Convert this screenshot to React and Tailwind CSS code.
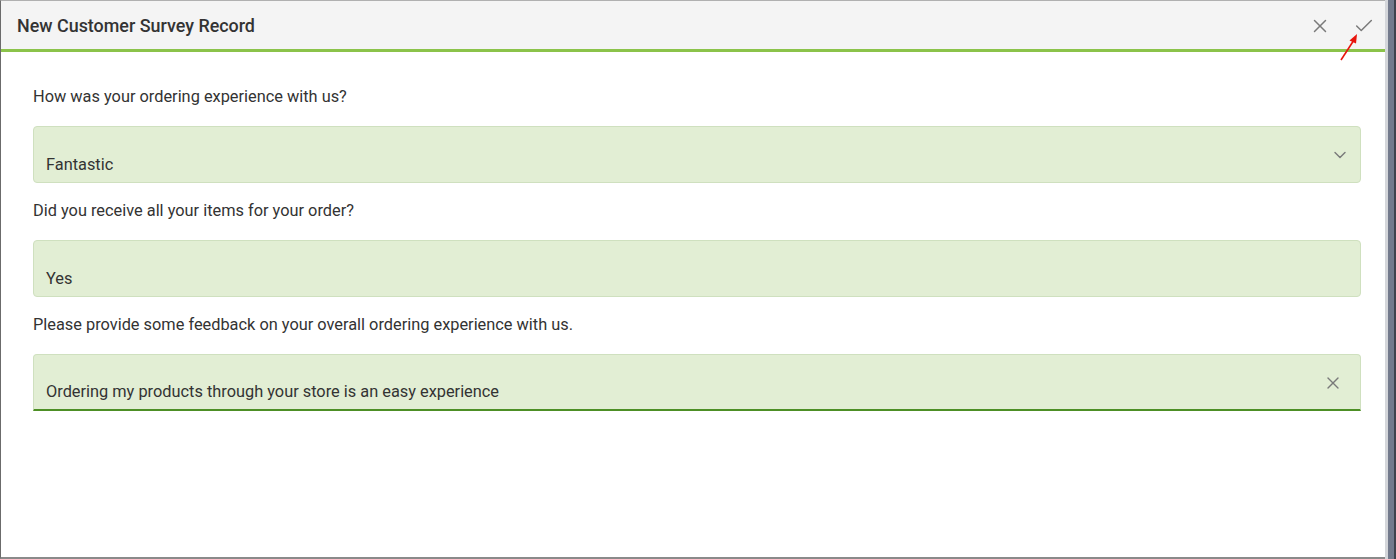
import { ChevronDown, X, Check } from "lucide-react";

const fields = [
  { key: "exp", label: "How was your ordering experience with us?", value: "Fantastic", icon: "chevron" },
  { key: "items", label: "Did you receive all your items for your order?", value: "Yes" },
  {
    key: "feedback",
    label: "Please provide some feedback on your overall ordering experience with us.",
    value: "Ordering my products through your store is an easy experience",
    icon: "clear",
    active: true,
  },
];

export default function App() {
  return (
    <div className="flex h-[559px] w-full bg-white font-['Roboto',sans-serif] text-[#333]">
      {/* dialog panel */}
      <div className="relative flex flex-1 flex-col border-b-2 border-l border-t border-b-[#8a8a8a] border-l-[#6b6b6b] border-t-[#b0b0b0]">
        <div className="flex h-[51px] items-center justify-between border-b-[3px] border-[#8bc34a] bg-[#f4f4f4] pb-[1px] pl-4 pr-[10px]">
          <h1 className="pt-[3px] text-[17.9px] font-medium">New Customer Survey Record</h1>
          <div className="flex items-center gap-[22px] pt-[3px] text-[#7a7a7a]">
            <X size={22} strokeWidth={1.6} />
            <Check size={22} strokeWidth={1.6} />
          </div>
        </div>

        {/* red annotation arrow */}
        <svg className="absolute left-[1336px] top-[30px]" width="26" height="32" viewBox="0 0 26 32">
          <line x1="4" y1="29" x2="17" y2="9" stroke="#e8140c" strokeWidth="1.6" />
          <path d="M20 3 L12.5 9.5 L19 12.5 Z" fill="#e8140c" />
        </svg>

        <div className="flex flex-col pl-8 pr-6 pt-[17px]">
          {fields.map((f) => (
            <div key={f.key} className="flex flex-col">
              <div className="flex h-[57px] items-center text-[16.35px]">{f.label}</div>
              <div
                className={[
                  "flex h-[57px] items-end rounded-[4px] border bg-[#e2eed4] pb-[4px] pl-3 pr-3 text-[16.35px]",
                  f.active ? "rounded-b-none border-[#cfe0bf] border-b-2 border-b-[#4d8f25]" : "border-[#cfe0bf]",
                ].join(" ")}
              >
                <span className="flex-1">{f.value}</span>
                {f.icon === "chevron" && (
                  <ChevronDown size={20} strokeWidth={1.7} className="mb-[13px] -mr-[2px] text-[#7a7a7a]" />
                )}
                {f.icon === "clear" && (
                  <X size={20} strokeWidth={1.6} className="mb-[12px] mr-[5px] text-[#7a7a7a]" />
                )}
              </div>
            </div>
          ))}
        </div>
      </div>

      {/* scrollbar strip */}
      <div className="flex h-full">
        <div className="w-[3px] bg-[#d4d6da]" />
        <div className="w-[6px] bg-[#737a8c]" />
        <div className="w-[2px] bg-[#3f434d]" />
      </div>
    </div>
  );
}
